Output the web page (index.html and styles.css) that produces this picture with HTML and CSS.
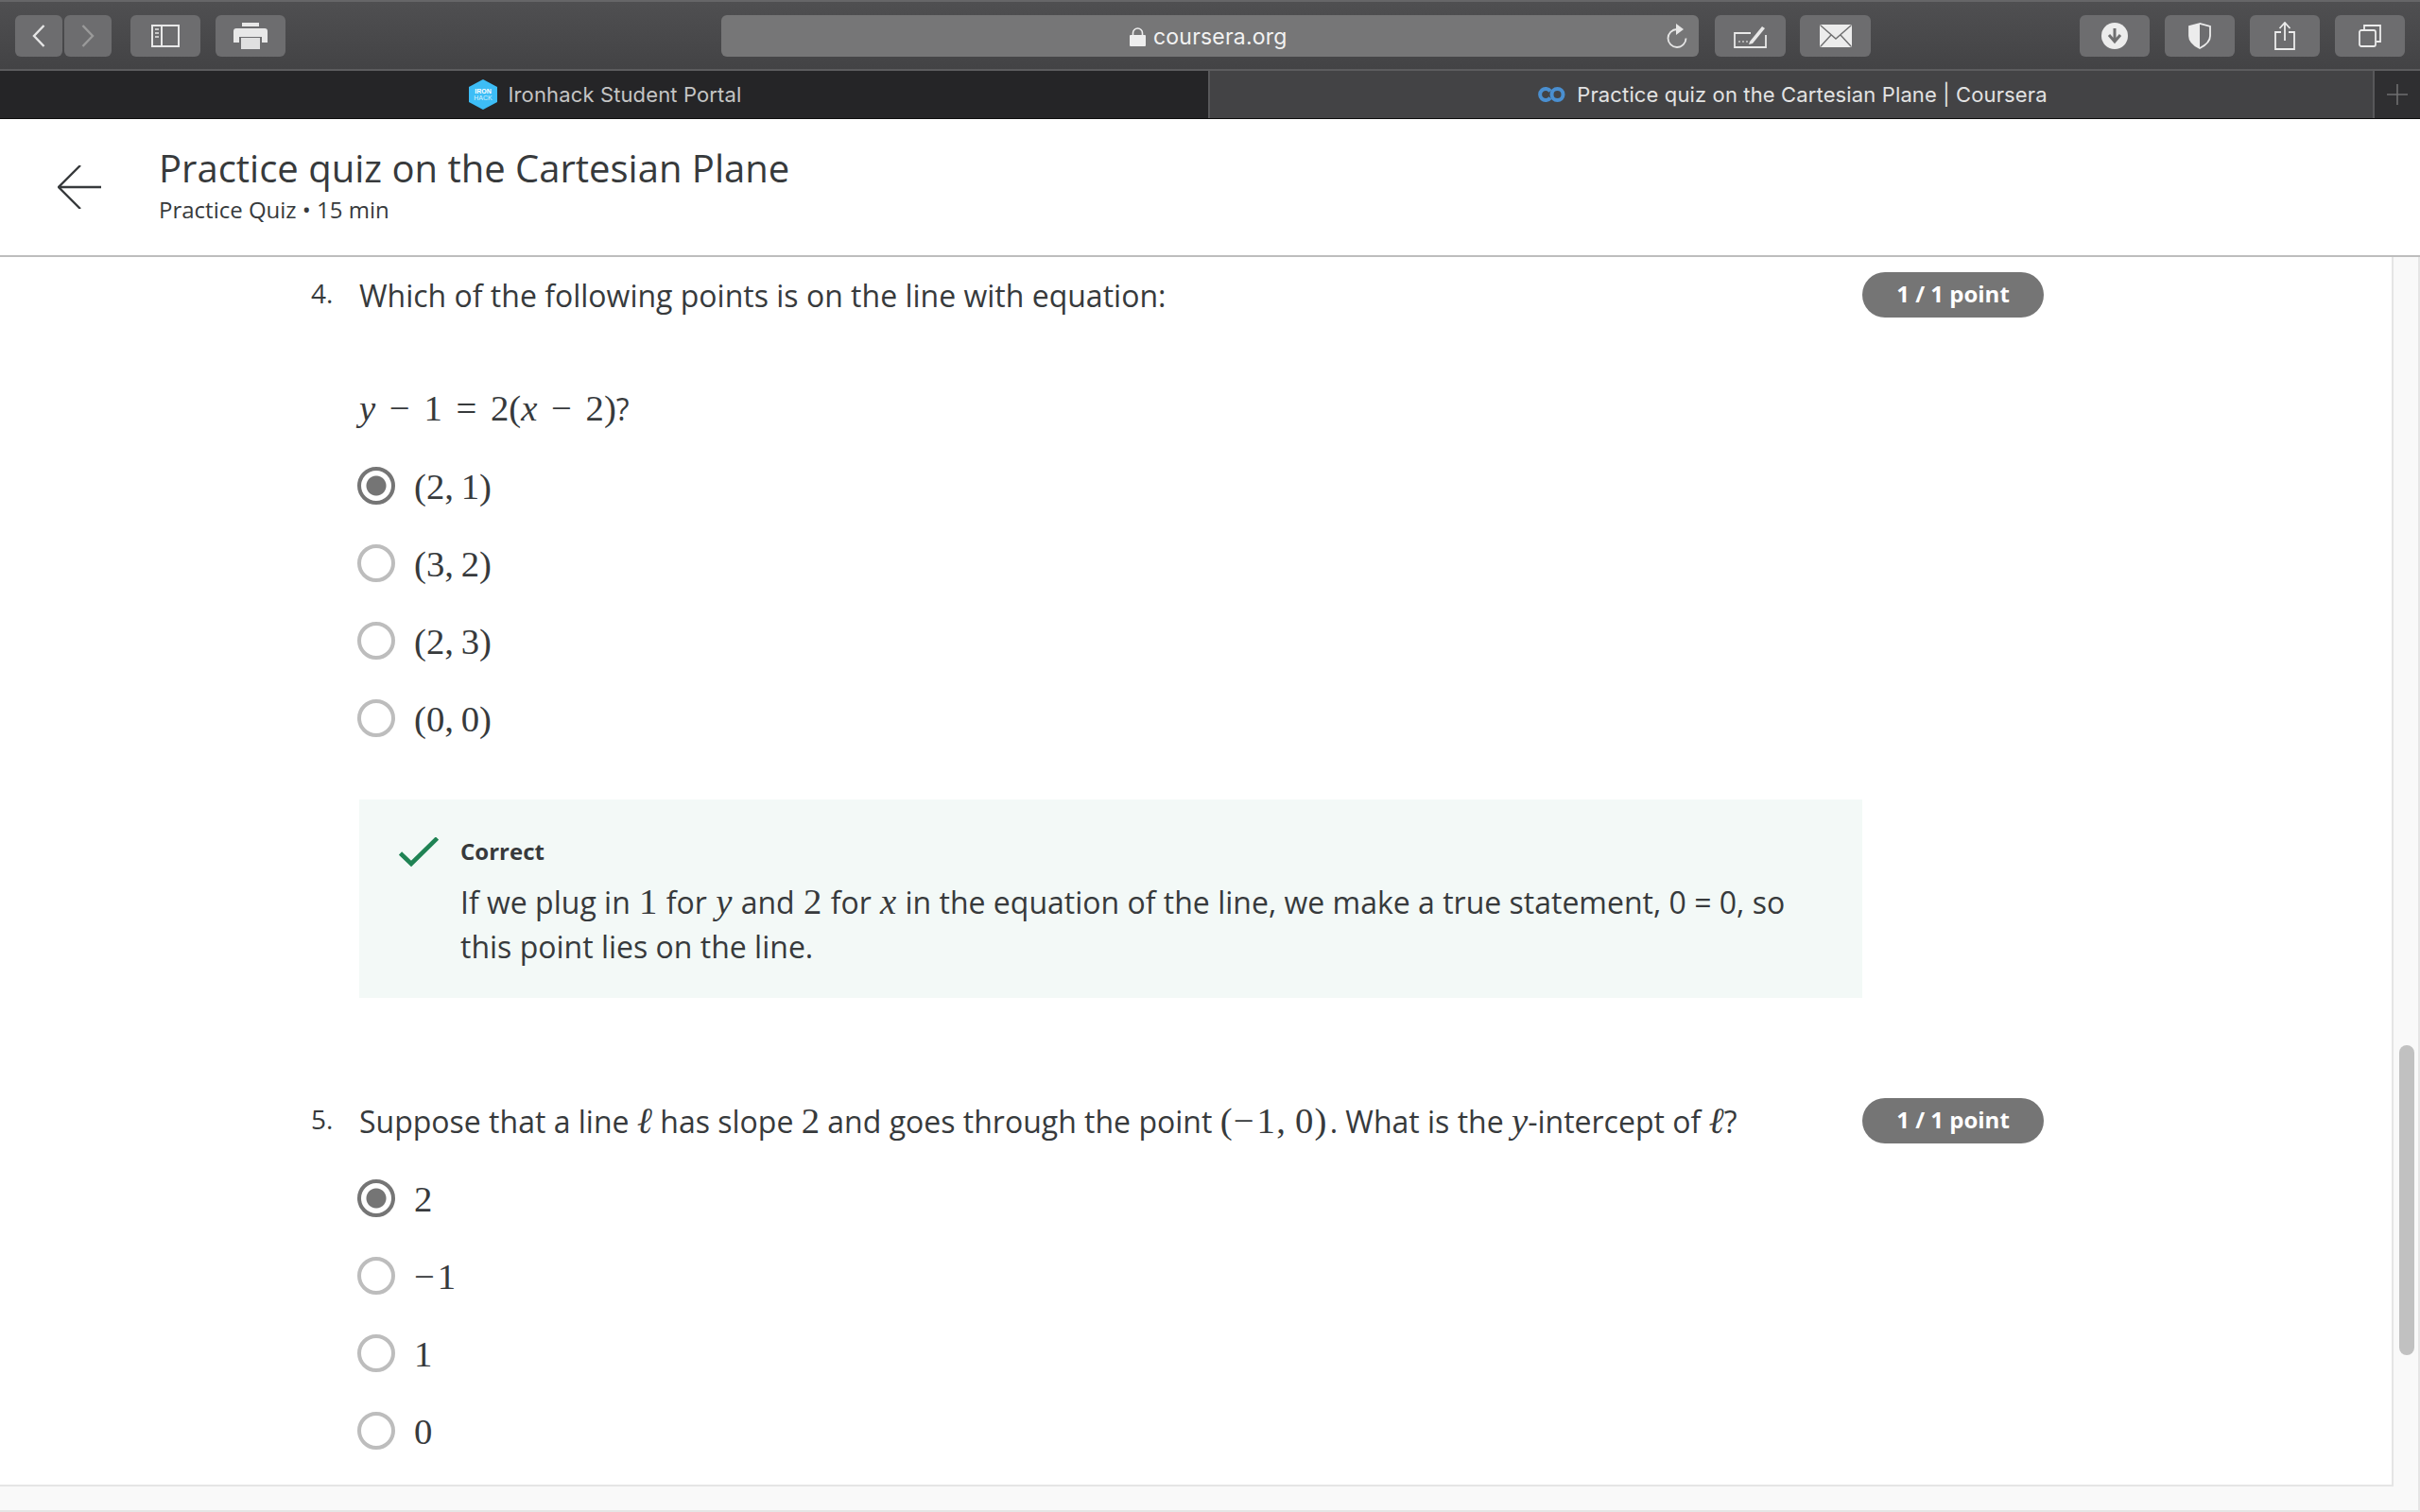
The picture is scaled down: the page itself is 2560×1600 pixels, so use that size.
FILE: index.html
```html
<!DOCTYPE html>
<html lang="en">
<head>
    <meta charset="UTF-8">
    <title>Practice quiz on the Cartesian Plane | Coursera</title>
    <link rel="stylesheet" href="styles.css">
</head>
<body>
    <div class="toolbar">
        <div class="tool-group nav-group">
            <div class="tool-btn nav-btn">
                <svg width="14" height="24" viewBox="0 0 14 24"><path d="M12.5 1 2 12l10.5 11" fill="none" stroke="#e6e6e6" stroke-width="2.4"/></svg>
            </div>
            <div class="tool-btn nav-btn">
                <svg width="14" height="24" viewBox="0 0 14 24"><path d="M1.5 1 12 12 1.5 23" fill="none" stroke="#9a9a9a" stroke-width="2.4"/></svg>
            </div>
        </div>
        <div class="tool-btn wide-btn side-btn">
            <svg width="30" height="24" viewBox="0 0 30 24">
                <rect x="1" y="1" width="28" height="22" fill="none" stroke="#e8e8e8" stroke-width="2"/>
                <path d="M11 1v22" stroke="#e8e8e8" stroke-width="2"/>
                <path d="M4 5h4M4 9h4M4 13h4" stroke="#c8c8c8" stroke-width="2"/>
            </svg>
        </div>
        <div class="tool-btn wide-btn">
            <svg width="36" height="28" viewBox="0 0 36 28">
                <rect x="9" y="0" width="18" height="4" fill="#e8e8e8"/>
                <path d="M3 6h30a3 3 0 0 1 3 3v12h-6v-6H6v6H0V9a3 3 0 0 1 3-3z" fill="#e8e8e8"/>
                <rect x="8" y="16" width="20" height="12" fill="#e0e0e0"/>
            </svg>
        </div>
        <div class="url-bar">
            <div class="url-text">
                <svg width="17" height="20" viewBox="0 0 17 20"><path d="M3.5 9V6a5 5 0 0 1 10 0v3" fill="none" stroke="#eee" stroke-width="1.6"/><rect x="0" y="8" width="17" height="12" rx="1" fill="#eee"/></svg>
                <span>coursera.org</span>
            </div>
            <svg class="reload" width="22" height="26" viewBox="0 0 22 26">
                <path d="M11 6a9.5 9.5 0 1 0 9.5 9.5" fill="none" stroke="#e6e6e6" stroke-width="1.8"/>
                <path d="M10 0l8 6-8 6z" fill="#e6e6e6"/>
            </svg>
        </div>
        <div class="tool-btn small-btn">
            <svg width="36" height="26" viewBox="0 0 36 26">
                <path d="M18 10H1v15h33V12" fill="none" stroke="#e8e8e8" stroke-width="1.8"/>
                <path d="M17 19 30 3l3 2-13 16-4 1z" fill="#e8e8e8"/>
                <path d="M5 19h2M9 19h2M13 19h2" stroke="#c8c8c8" stroke-width="1.6"/>
            </svg>
        </div>
        <div class="tool-btn small-btn">
            <svg width="34" height="24" viewBox="0 0 34 24">
                <rect width="34" height="24" rx="2" fill="#ececec"/>
                <path d="M1 1l16 14L33 1M1 23l11-12M33 23 22 11" fill="none" stroke="#6f6f70" stroke-width="1.4"/>
            </svg>
        </div>
        <div class="tool-spacer"></div>
        <div class="tool-btn right-btn">
            <svg width="28" height="28" viewBox="0 0 28 28">
                <circle cx="14" cy="14" r="14" fill="#ececec"/>
                <path d="M14 6v12M8 13l6 7 6-7" fill="none" stroke="#6f6f70" stroke-width="3"/>
            </svg>
        </div>
        <div class="tool-btn right-btn">
            <svg width="24" height="28" viewBox="0 0 24 28">
                <path d="M12 1 1 4v10c0 6 5 10 11 13 6-3 11-7 11-13V4z" fill="none" stroke="#ececec" stroke-width="1.8"/>
                <path d="M12 1 1 4v10c0 6 5 10 11 13z" fill="#ececec"/>
            </svg>
        </div>
        <div class="tool-btn right-btn">
            <svg width="22" height="30" viewBox="0 0 22 30">
                <path d="M7 11H1v18h20V11h-6" fill="none" stroke="#ececec" stroke-width="1.8"/>
                <path d="M11 20V2M5.500 7 11 1l5.500 6" fill="none" stroke="#ececec" stroke-width="1.8"/>
            </svg>
        </div>
        <div class="tool-btn right-btn">
            <svg width="24" height="24" viewBox="0 0 24 24">
                <rect x="1" y="6" width="17" height="17" rx="2" fill="none" stroke="#ececec" stroke-width="1.8"/>
                <path d="M6 5V1h17v17h-4" fill="none" stroke="#ececec" stroke-width="1.8"/>
            </svg>
        </div>
    </div>

    <div class="tabs">
        <div class="tab tab-off">
            <svg width="30" height="32" viewBox="0 0 30 32">
                <path d="M15 0 30 8v16l-15 8L0 24V8z" fill="#3dbdf6"/>
                <text x="15" y="15" class="logo-iron">IRON</text>
                <text x="15" y="22" class="logo-hack">HACK</text>
            </svg>
            <span>Ironhack Student Portal</span>
        </div>
        <div class="tab tab-on">
            <svg width="30" height="16" viewBox="0 0 30 16">
                <path d="M14 4.500A6 6 0 1 0 14 11.500" fill="none" stroke="#4a8fd0" stroke-width="4"/>
                <circle cx="21.500" cy="8" r="6" fill="none" stroke="#4a8fd0" stroke-width="4"/>
            </svg>
            <span>Practice quiz on the Cartesian Plane | Coursera</span>
        </div>
        <div class="tab-plus">
            <svg width="22" height="22" viewBox="0 0 22 22"><path d="M11 0v22M0 11h22" stroke="#6f6f70" stroke-width="1.600"/></svg>
        </div>
    </div>

    <div class="page-header">
        <svg class="back-arrow" width="46" height="46" viewBox="0 0 46 46">
            <path d="M24 0 1 23l23 23M1 23h45" fill="none" stroke="#373a3c" stroke-width="2.400"/>
        </svg>
        <div class="page-head-text">
            <div class="page-title">Practice quiz on the Cartesian Plane</div>
            <div class="page-sub">Practice Quiz • 15 min</div>
        </div>
    </div>

    <div class="main">
        <div class="quiz">
            <div class="question">
                <div class="q-num">4.</div>
                <div class="q-text">Which of the following points is on the line with equation:</div>
                <div class="badge">1 / 1 point</div>
            </div>
            <div class="equation"><span class="math"><i>y</i> − 1 = 2(<i>x</i> − 2)</span>?</div>

            <div class="option"><span class="radio checked"></span><span class="math">(2,&#8201;1)</span></div>
            <div class="option"><span class="radio"></span><span class="math">(3,&#8201;2)</span></div>
            <div class="option"><span class="radio"></span><span class="math">(2,&#8201;3)</span></div>
            <div class="option"><span class="radio"></span><span class="math">(0,&#8201;0)</span></div>

            <div class="feedback">
                <svg class="check" width="42" height="32" viewBox="0 0 42 32">
                    <path d="M1.500 17 13 28 40.500 1" fill="none" stroke="#1f8354" stroke-width="4.600"/>
                </svg>
                <div>
                    <div class="feedback-title">Correct</div>
                    <div class="feedback-text">If we plug in <span class="math">1</span> for <span class="math"><i>y</i></span> and <span class="math">2</span> for <span class="math"><i>x</i></span> in the equation of the line, we make a true statement, 0 = 0, so<br>this point lies on the line.</div>
                </div>
            </div>

            <div class="question question-next">
                <div class="q-num">5.</div>
                <div class="q-text">Suppose that a line <span class="math"><i>ℓ</i></span> has slope <span class="math">2</span> and goes through the point <span class="math point">(<span class="neg">−</span>1,&#8201;0)</span>. What is the <span class="math"><i>y</i></span>-intercept of <span class="math"><i>ℓ</i></span>?</div>
                <div class="badge">1 / 1 point</div>
            </div>

            <div class="option first-option"><span class="radio checked"></span><span class="math">2</span></div>
            <div class="option"><span class="radio"></span><span class="math"><span class="neg">−</span>1</span></div>
            <div class="option"><span class="radio"></span><span class="math">1</span></div>
            <div class="option"><span class="radio"></span><span class="math">0</span></div>
        </div>
        <div class="scroll-track">
            <div class="scroll-thumb"></div>
        </div>
    </div>
</body>
</html>
```

FILE: styles.css
```css
html, body {
    margin: 0;
    height: 1600px;
    overflow: hidden;
}

body {
    display: flex;
    flex-direction: column;
    font-family: "Open Sans", sans-serif;
    color: #373a3c;
    background-color: #fff;
}

/* browser chrome */
.toolbar {
    height: 75px;
    box-sizing: border-box;
    display: flex;
    align-items: flex-start;
    padding: 14px 16px 0 16px;
    background: linear-gradient(#4f4f51, #434345);
    border-top: 2px solid #666668;
    border-bottom: 2px solid #5c5c5e;
}

.tool-btn {
    height: 44px;
    display: flex;
    align-items: center;
    justify-content: center;
    background-color: #6d6d6f;
    border-radius: 6px;
}

.nav-group {
    display: flex;
    gap: 2px;
}

.nav-btn {
    width: 50px;
}

.wide-btn {
    width: 74px;
    margin-left: 20px;
}

.wide-btn + .wide-btn {
    margin-left: 16px;
}

.url-bar {
    width: 1034px;
    height: 44px;
    margin: 0 17px 0 461px;
    display: flex;
    align-items: center;
    justify-content: space-between;
    background-color: #767677;
    border-radius: 6px;
}

.url-text {
    display: flex;
    align-items: center;
    gap: 8px;
    margin-left: 432px;
    padding-top: 2px;
    font-family: Inter, sans-serif;
    font-size: 23px;
    letter-spacing: 0.2px;
    color: #f2f2f2;
}

.reload {
    margin-right: 12px;
}

.small-btn {
    width: 75px;
    margin-right: 15px;
}

.tool-spacer {
    flex: 1;
}

.right-btn {
    width: 74px;
    margin-left: 16px;
}

.tabs {
    height: 51px;
    box-sizing: border-box;
    display: flex;
    border-bottom: 1px solid #0c0c0c;
    font-family: Inter, sans-serif;
    font-size: 22px;
    letter-spacing: 0.13px;
}

.tab {
    display: flex;
    align-items: center;
    justify-content: center;
    gap: 12px;
    padding-left: 2px;
    box-sizing: border-box;
}

.tab-off {
    width: 1278px;
    background-color: #252527;
    color: #c4c4c4;
}

.tab-on {
    flex: 1;
    border-left: 2px solid #58585a;
    background-color: #434345;
    color: #e2e2e2;
}

.tab-plus {
    width: 48px;
    display: flex;
    align-items: center;
    justify-content: center;
    border-left: 2px solid #58585a;
    background-color: #2f2f31;
}

.logo-iron, .logo-hack {
    font-family: "Liberation Sans", sans-serif;
    font-size: 7px;
    font-weight: bold;
    letter-spacing: 0;
    text-anchor: middle;
    fill: #fff;
}

.logo-hack {
    fill: #d5f1fd;
    font-weight: normal;
}

/* coursera header */
.page-header {
    height: 146px;
    box-sizing: border-box;
    display: flex;
    align-items: center;
    gap: 61px;
    padding-left: 61px;
    border-bottom: 2px solid #bdbdbd;
}

.page-head-text {
    padding-bottom: 8px;
}

.page-title {
    font-size: 40px;
    line-height: 54px;
    margin-bottom: 1px;
}

.page-sub {
    font-size: 24px;
    line-height: 32px;
}

.main {
    flex: 1;
    display: flex;
    box-sizing: border-box;
    min-height: 0;
    background-color: #f9f9f9;
    border-right: 2px solid #e5e5e5;
    border-bottom: 2px solid #e5e5e5;
}

.quiz {
    flex: 1;
    margin-bottom: 25px;
    box-sizing: border-box;
    padding: 16px 368px 0 329px;
    background-color: #fff;
    border-right: 2px solid #e5e5e5;
    border-bottom: 2px solid #e5e5e5;
    overflow: hidden;
}

.scroll-track {
    width: 26px;
    box-sizing: border-box;
    padding: 834px 0 0 6px;
}

.scroll-thumb {
    width: 16px;
    height: 328px;
    border-radius: 8px;
    background-color: #c1c1c1;
}

/* questions */
.question {
    display: flex;
    align-items: center;
    height: 48px;
}

.question-next {
    margin-top: 106px;
}

.q-num {
    width: 51px;
    font-size: 28px;
    padding-bottom: 4px;
}

.q-text {
    flex: 1;
    font-size: 32px;
}

.badge {
    width: 192px;
    height: 48px;
    line-height: 46px;
    text-align: center;
    border-radius: 24px;
    background-color: #757575;
    color: #fff;
    font-size: 24px;
    font-weight: 700;
}

.math {
    font-family: "Liberation Serif", serif;
    font-size: 1.21em;
    line-height: 1;
}

.neg {
    letter-spacing: 3px;
}

.point {
    letter-spacing: 1.2px;
    margin-right: 2px;
}

.equation {
    height: 137px;
    box-sizing: border-box;
    padding: 75px 0 0 51px;
    font-size: 32px;
}

.equation .math {
    word-spacing: 5px;
}

.option {
    display: flex;
    align-items: center;
    gap: 20px;
    height: 82px;
    margin-left: 49px;
    padding-top: 2px;
    box-sizing: border-box;
    font-size: 32px;
}

.first-option {
    margin-top: 17px;
}

.radio {
    width: 40px;
    height: 40px;
    margin-top: -2px;
    box-sizing: border-box;
    border: 4px solid #bdbdbd;
    border-radius: 50%;
    background-color: #fff;
}

.radio.checked {
    border-color: #757575;
    background: radial-gradient(circle, #757575 0 10px, #fff 11px);
}

.feedback {
    display: flex;
    align-items: flex-start;
    gap: 23px;
    margin: 45px 0 0 51px;
    width: 1590px;
    height: 210px;
    box-sizing: border-box;
    padding: 40px 60px 0 42px;
    background-color: #f3f9f7;
}

.check {
    flex-shrink: 0;
}

.feedback-title {
    font-size: 24px;
    font-weight: 700;
    line-height: 30px;
    margin-bottom: 15px;
}

.feedback-text {
    font-size: 32px;
    line-height: 47px;
}

.feedback-text .math {
    margin: 0 1px;
}
```
